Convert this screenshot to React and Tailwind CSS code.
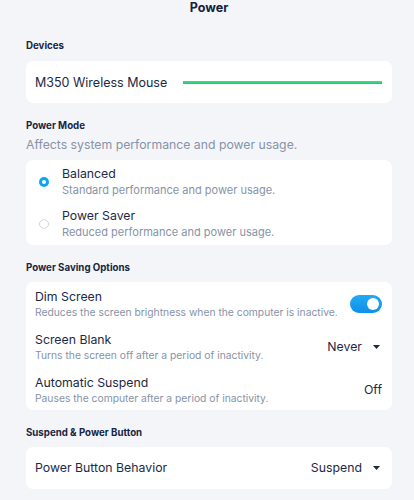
import React from "react";

function Caret() {
  return (
    <svg width="7" height="4" viewBox="0 0 7 4" className="ml-[11px] text-[#1c2945]">
      <path d="M0 0 H7 L3.5 4 Z" fill="currentColor" />
    </svg>
  );
}

function Row({ title, sub, right }) {
  return (
    <div className="flex items-center">
      <div className="flex-1 min-w-0">
        <div className="text-[12.3px] leading-4 text-[#1c2945]">{title}</div>
        <div className="text-[10.3px] leading-[14px] text-[#8693a7]">{sub}</div>
      </div>
      {right}
    </div>
  );
}

function Radio({ on }) {
  return on ? (
    <div className="w-[10px] h-[10px] rounded-full bg-[#0ea5f0] flex items-center justify-center shrink-0">
      <div className="w-[4px] h-[4px] rounded-full bg-white" />
    </div>
  ) : (
    <div className="w-[10px] h-[10px] rounded-full border border-[#d3d8e0] bg-white shrink-0" />
  );
}

function Label({ children, className = "" }) {
  return (
    <div className={"text-[9.7px] leading-[14px] font-bold text-[#172542] " + className}>{children}</div>
  );
}

export default function App() {
  return (
    <div
      className="w-[414px] h-[500px] bg-[#f4f5f9] pl-[26px] pr-[22px] overflow-hidden"
      style={{ fontFamily: "Inter, 'Noto Sans', sans-serif" }}
    >
      <div className="text-center text-[12.5px] leading-4 font-bold text-[#13213d]">Power</div>

      <Label className="mt-[23px]">Devices</Label>
      <div className="mt-2 h-[42px] bg-white rounded-[7px] flex items-center pl-[9px] pr-[10px] pt-[2px]">
        <span className="text-[12.5px] text-[#1c2945]">M350 Wireless Mouse</span>
        <div className="flex-1 ml-4 h-[3px] -mt-[2px] bg-gradient-to-b from-[#3ee08e] to-[#17c96f]" />
      </div>

      <Label className="mt-4">Power Mode</Label>
      <div className="mt-[3px] text-[12.25px] leading-[18px] text-[#8693a7]">
        Affects system performance and power usage.
      </div>
      <div className="mt-[6px] bg-white rounded-[7px] py-[6px] pl-[13px] pr-[10px] flex flex-col gap-[11px]">
        <div className="flex items-center gap-[13px]">
          <Radio on />
          <div>
            <div className="text-[12.3px] leading-4 text-[#1c2945]">Balanced</div>
            <div className="mt-px text-[11px] leading-[14px] text-[#8693a7]">Standard performance and power usage.</div>
          </div>
        </div>
        <div className="flex items-center gap-[13px]">
          <Radio />
          <div>
            <div className="text-[12.3px] leading-4 text-[#1c2945]">Power Saver</div>
            <div className="mt-px text-[11px] leading-[14px] text-[#8693a7]">Reduced performance and power usage.</div>
          </div>
        </div>
      </div>

      <Label className="mt-4">Power Saving Options</Label>
      <div className="mt-[7px] bg-white rounded-[7px] pt-[7px] pb-[5px] pl-[9px] pr-[10px] flex flex-col gap-[13px]">
        <Row
          title="Dim Screen"
          sub="Reduces the screen brightness when the computer is inactive."
          right={
            <div className="w-[32px] h-[18px] rounded-full bg-gradient-to-b from-[#22aaf5] to-[#0d90e6] flex items-center justify-end pr-[3px] shrink-0">
              <div className="w-[12px] h-[12px] rounded-full bg-white" />
            </div>
          }
        />
        <Row
          title="Screen Blank"
          sub="Turns the screen off after a period of inactivity."
          right={
            <div className="flex items-center pr-[2px]">
              <span className="text-[12.3px] text-[#1c2945]">Never</span>
              <Caret />
            </div>
          }
        />
        <Row
          title="Automatic Suspend"
          sub="Pauses the computer after a period of inactivity."
          right={<span className="text-[12.3px] text-[#1c2945]">Off</span>}
        />
      </div>

      <Label className="mt-4">Suspend &amp; Power Button</Label>
      <div className="mt-[7px] h-[42px] bg-white rounded-[7px] flex items-center pl-[9px] pr-[12px]">
        <span className="flex-1 text-[12.3px] text-[#1c2945]">Power Button Behavior</span>
        <span className="text-[12.3px] text-[#1c2945]">Suspend</span>
        <Caret />
      </div>
    </div>
  );
}
